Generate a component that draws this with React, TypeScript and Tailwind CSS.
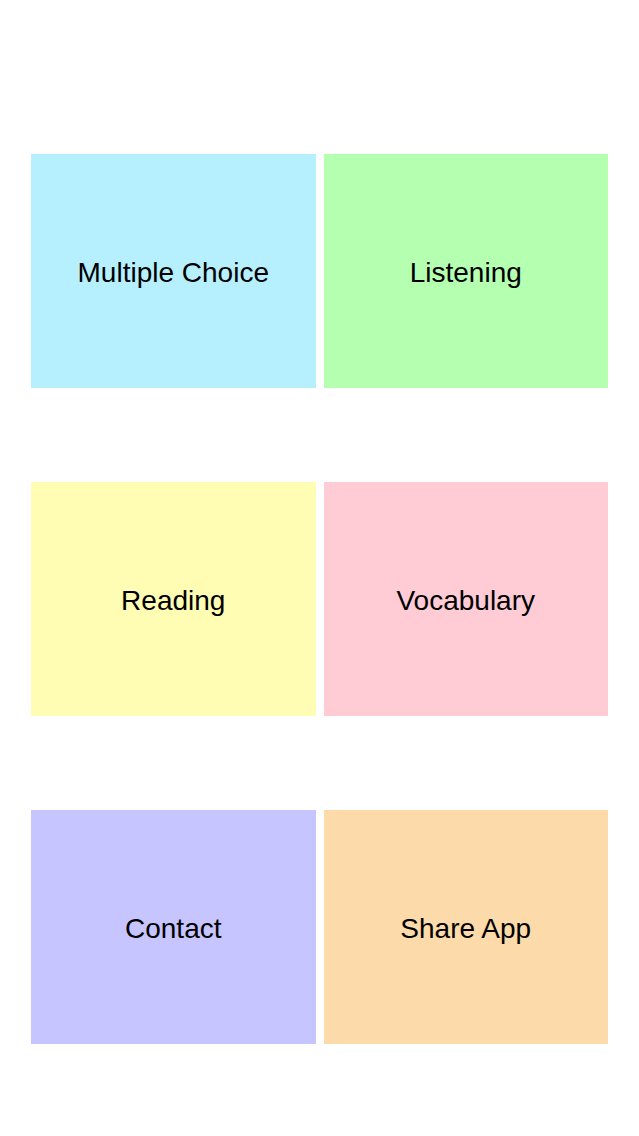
const tiles = [
  { label: 'Multiple Choice', bg: 'bg-[#b6f0ff]' },
  { label: 'Listening', bg: 'bg-[#b4ffb0]' },
  { label: 'Reading', bg: 'bg-[#fffcb4]' },
  { label: 'Vocabulary', bg: 'bg-[#ffccd5]' },
  { label: 'Contact', bg: 'bg-[#c6c5ff]' },
  { label: 'Share App', bg: 'bg-[#fddaa9]' },
];

export default function App() {
  return (
    <div className="min-h-[1136px] w-[639px] bg-white px-[31px] pt-[154px] font-['Liberation_Sans',Arial,sans-serif]">
      <div className="grid grid-cols-2 gap-x-2 gap-y-[94px]">
        {tiles.map((t) => (
          <div
            key={t.label}
            className={`${t.bg} h-[234px] pt-1 flex items-center justify-center text-[28px] text-black`}
          >
            {t.label}
          </div>
        ))}
      </div>
    </div>
  );
}
